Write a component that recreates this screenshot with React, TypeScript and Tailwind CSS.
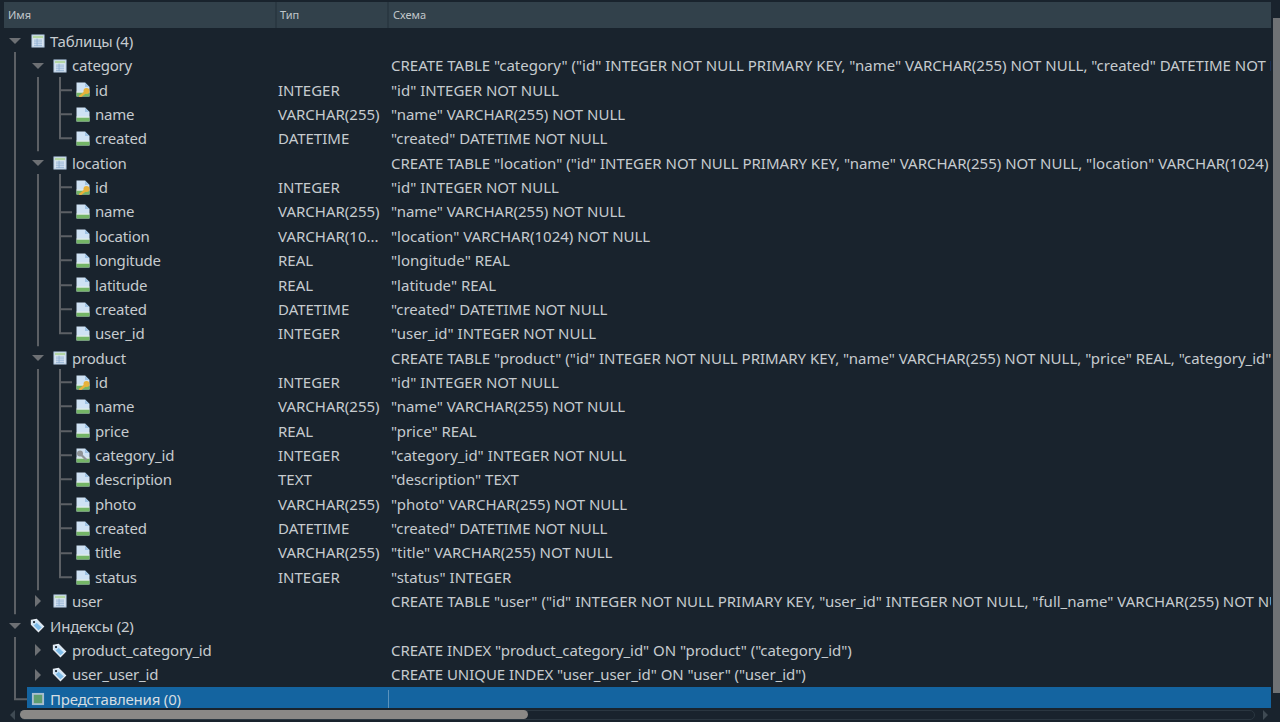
type IconKind = 'table' | 'column' | 'key' | 'fkey' | 'tag' | 'view'

interface Row {
  level: number
  arrow?: 'open' | 'closed'
  icon: IconKind
  name: string
  type?: string
  schema?: string
  guides: string
  selected?: boolean
}

const tableRow = (name: string, arrow: 'open' | 'closed', schema: string, guides = 'a'): Row => ({
  level: 1,
  arrow,
  icon: 'table',
  name,
  schema,
  guides,
})

const col = (name: string, type: string, schema: string, icon: IconKind = 'column', last = false): Row => ({
  level: 2,
  icon,
  name,
  type,
  schema,
  guides: last ? 'abl' : 'abe',
})

const rows: Row[] = [
  { level: 0, arrow: 'open', icon: 'table', name: 'Таблицы (4)', guides: '' },
  tableRow('category', 'open', 'CREATE TABLE "category" ("id" INTEGER NOT NULL PRIMARY KEY, "name" VARCHAR(255) NOT NULL, "created" DATETIME NOT NULL)'),
  col('id', 'INTEGER', '"id" INTEGER NOT NULL', 'key'),
  col('name', 'VARCHAR(255)', '"name" VARCHAR(255) NOT NULL'),
  col('created', 'DATETIME', '"created" DATETIME NOT NULL', 'column', true),
  tableRow('location', 'open', 'CREATE TABLE "location" ("id" INTEGER NOT NULL PRIMARY KEY, "name" VARCHAR(255) NOT NULL, "location" VARCHAR(1024) NOT NULL)'),
  col('id', 'INTEGER', '"id" INTEGER NOT NULL', 'key'),
  col('name', 'VARCHAR(255)', '"name" VARCHAR(255) NOT NULL'),
  col('location', 'VARCHAR(10...', '"location" VARCHAR(1024) NOT NULL'),
  col('longitude', 'REAL', '"longitude" REAL'),
  col('latitude', 'REAL', '"latitude" REAL'),
  col('created', 'DATETIME', '"created" DATETIME NOT NULL'),
  col('user_id', 'INTEGER', '"user_id" INTEGER NOT NULL', 'column', true),
  tableRow('product', 'open', 'CREATE TABLE "product" ("id" INTEGER NOT NULL PRIMARY KEY, "name" VARCHAR(255) NOT NULL, "price" REAL, "category_id" INTEGER NOT NULL)'),
  col('id', 'INTEGER', '"id" INTEGER NOT NULL', 'key'),
  col('name', 'VARCHAR(255)', '"name" VARCHAR(255) NOT NULL'),
  col('price', 'REAL', '"price" REAL'),
  col('category_id', 'INTEGER', '"category_id" INTEGER NOT NULL', 'fkey'),
  col('description', 'TEXT', '"description" TEXT'),
  col('photo', 'VARCHAR(255)', '"photo" VARCHAR(255) NOT NULL'),
  col('created', 'DATETIME', '"created" DATETIME NOT NULL'),
  col('title', 'VARCHAR(255)', '"title" VARCHAR(255) NOT NULL'),
  col('status', 'INTEGER', '"status" INTEGER', 'column', true),
  tableRow('user', 'closed', 'CREATE TABLE "user" ("id" INTEGER NOT NULL PRIMARY KEY, "user_id" INTEGER NOT NULL, "full_name" VARCHAR(255) NOT NULL)'),
  { level: 0, arrow: 'open', icon: 'tag', name: 'Индексы (2)', guides: '' },
  { level: 1, arrow: 'closed', icon: 'tag', name: 'product_category_id', schema: 'CREATE INDEX "product_category_id" ON "product" ("category_id")', guides: 'a' },
  { level: 1, arrow: 'closed', icon: 'tag', name: 'user_user_id', schema: 'CREATE UNIQUE INDEX "user_user_id" ON "user" ("user_id")', guides: 'a' },
  { level: 0, icon: 'view', name: 'Представления (0)', guides: 'r', selected: true },
]

function Icon({ kind }: { kind: IconKind }) {
  if (kind === 'table') {
    return (
      <svg width="14" height="14" viewBox="0 0 15 15" className="shrink-0">
        <rect x="1" y="1" width="13" height="13" fill="#dfe9f5" stroke="#a9c0d8" />
        <rect x="2" y="2" width="11" height="2.5" fill="#b4d6a4" />
        <path d="M3 6.5h9M3 8.5h9M3 10.5h9M3 12.5h9" stroke="#8fb0d2" strokeWidth="1" />
        <path d="M6.5 5v8" stroke="#8fb0d2" strokeWidth="1" />
      </svg>
    )
  }
  if (kind === 'tag') {
    return (
      <svg width="15" height="15" viewBox="0 0 16 16" className="-ml-px shrink-0">
        <path d="M1.5 2.5 L7 1.5 L14.5 9 L9 14.5 L1.5 7 Z" fill="#cfe6f8" stroke="#e8eef4" strokeWidth="1.2" />
        <path d="M7 5 L12.5 10 L9 13 L4 8 Z" fill="#7fbce8" />
        <circle cx="4.3" cy="4.3" r="1.2" fill="#19232d" />
      </svg>
    )
  }
  if (kind === 'view') {
    return (
      <svg width="14" height="14" viewBox="0 0 15 15" className="shrink-0">
        <rect x="1" y="1" width="13" height="13" fill="#a9bfd0" />
        <rect x="3" y="3" width="9" height="9" fill="#5e9e70" />
      </svg>
    )
  }
  return (
    <svg width="14" height="15" viewBox="0 0 14 15" className="shrink-0">
      <path d="M0.5 0.5 H9 L13.5 5 V14.5 H0.5 Z" fill="#cfe2f4" />
      <path d="M9 0.5 V5 H13.5" fill="#9fc3e4" />
      <path d="M0.5 10.5 H13.5 V14.5 H0.5 Z" fill="#74b566" />
      <path d="M0.5 9.5 H13.5 V10.5 H0.5 Z" fill="#e4efe4" />
      {kind === 'key' && (
        <>
          <circle cx="10.5" cy="9" r="3" fill="#e7b23c" />
          <path d="M9 10.5 L3.5 15" stroke="#e7b23c" strokeWidth="2.4" />
        </>
      )}
      {kind === 'fkey' && (
        <>
          <circle cx="4" cy="5.5" r="3" fill="#8f9396" />
          <path d="M5.5 7 L10.5 12" stroke="#8f9396" strokeWidth="2.2" />
        </>
      )}
    </svg>
  )
}

function Arrow({ dir }: { dir: 'open' | 'closed' }) {
  return (
    <svg width="14" height="14" viewBox="0 0 14 14" className="shrink-0">
      {dir === 'open' ? <path d="M1 4 H13 L7 10 Z" fill="#6d7074" /> : <path d="M4 1 L10 7 L4 13 Z" fill="#6d7074" />}
    </svg>
  )
}

// tree guide lines for one row, drawn in the row's own coordinates
function Guides({ guides }: { guides: string }) {
  if (!guides) return null
  return (
    <svg width="76" height="100%" viewBox="0 0 76 24" preserveAspectRatio="none" className="absolute left-0 top-0 h-full overflow-visible">
      <g stroke="#5c6065" strokeWidth="2" fill="none">
        {guides.includes('a') && <path d="M15 -1V25" />}
        {guides.includes('r') && <path d="M15 -1V12H27" />}
        {guides.includes('b') && <path d="M38 -1V25" />}
        {guides.includes('e') && <path d="M60 -1V25M60 12H72" />}
        {guides.includes('l') && <path d="M60 -1V12H72" />}
      </g>
    </svg>
  )
}

function TreeRow({ row }: { row: Row }) {
  const indent = row.level === 0 ? 'pl-[8px]' : row.level === 1 ? 'pl-[31px]' : 'pl-[76px]'
  const gap = row.level === 0 ? 'ml-[9px] flex items-center' : row.level === 1 ? 'ml-[8px] flex items-center' : 'flex items-center'
  return (
    <div className="relative flex h-[24.37px] items-center">
      <Guides guides={row.guides} />
      <div className={`flex w-[276px] shrink-0 items-center overflow-hidden tracking-[-0.2px] ${indent}`}>
        {row.level < 2 && <span className="flex w-[14px] shrink-0">{row.arrow && <Arrow dir={row.arrow} />}</span>}
        <span className={gap}>
          <Icon kind={row.icon} />
          <span className="ml-[5px]">{row.name}</span>
        </span>
      </div>
      <div className="w-[112px] shrink-0 truncate pl-[2px]">{row.type}</div>
      <div className={`min-w-0 flex-1 overflow-hidden whitespace-nowrap pl-[3px] ${row.icon === 'tag' ? 'tracking-[-0.05px]' : ''}`}>
        {row.schema}
      </div>
    </div>
  )
}

function Header() {
  return (
    <div className="ml-[4px] mt-[2px] flex h-[26px] shrink-0 items-center bg-[#32414b] text-[11px] text-[#c0c6ca]">
      <div className="flex h-full w-[273px] items-center border-r-2 border-[#2a3842] pl-[4px]">Имя</div>
      <div className="flex h-full w-[112px] items-center border-r-2 border-[#2a3842] pl-[3px]">Тип</div>
      <div className="flex h-full flex-1 items-center pl-[4px]">Схема</div>
    </div>
  )
}

export default function App() {
  return (
    <div className="flex h-[722px] w-[1280px] flex-col overflow-hidden bg-[#19232d] font-['Noto_Sans',sans-serif] text-[15px] text-[#c6cbcf]">
      <div className="relative flex min-h-0 flex-1">
        <div className="mr-[2px] flex min-w-0 flex-1 flex-col">
          <Header />
          <div className="mt-[1px] min-h-0 flex-1">
            {rows.map((row, i) =>
              row.selected ? (
                <div key={i} className="relative flex h-[24.37px] items-start">
                  <Guides guides={row.guides} />
                  <div className="ml-[27px] flex h-[21px] flex-1 items-center overflow-hidden bg-[#1464a0] pl-[4px] pt-[4px] tracking-[-0.2px] text-[#d5dde2]">
                    <span className="flex h-[18px] w-[358px] items-center border-r border-[#5b93bd]">
                      <Icon kind={row.icon} />
                      <span className="ml-[5px]">{row.name}</span>
                    </span>
                  </div>
                </div>
              ) : (
                <TreeRow key={i} row={row} />
              ),
            )}
          </div>
        </div>
        <div className="mb-[16px] mt-[18px] w-[7px] shrink-0 bg-[#6f7275]" />
      </div>
      <div className="flex h-[13px] shrink-0 items-center pb-[2px]">
        <svg width="20" height="12" viewBox="0 0 20 12" className="shrink-0">
          <path d="M15 1 L10 6 L15 11 Z" fill="#3f4a53" />
        </svg>
        <div className="flex h-[10px] w-[1235px] items-center rounded-[5px] border border-[#2a3640]">
          <div className="-ml-px h-[9px] w-[508px] rounded-[5px] bg-[#8a8886]" />
        </div>
        <svg width="24" height="12" viewBox="0 0 24 12" className="shrink-0">
          <path d="M8 1 L13 6 L8 11 Z" fill="#3f4a53" />
        </svg>
      </div>
    </div>
  )
}
